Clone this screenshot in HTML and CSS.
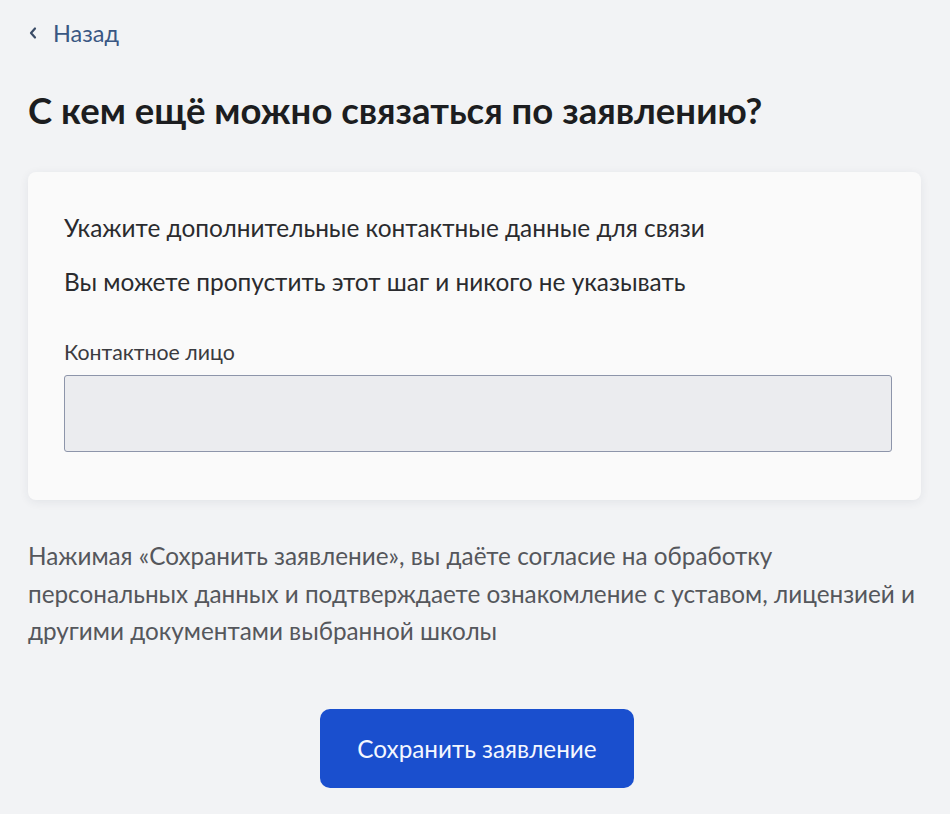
FILE: index.html
```html
<!DOCTYPE html>
<html lang="ru">
<head>
<meta charset="utf-8">
<title>С кем ещё можно связаться</title>
<link rel="stylesheet" href="styles.css">
</head>
<body>
<div class="page">
  <a class="back" href="#"><span class="chev"><svg width="10" height="14" viewBox="0 0 10 14"><path d="M7 2.5 L3 7 L7 11.5" fill="none" stroke="currentColor" stroke-width="2.2" stroke-linecap="round" stroke-linejoin="round"/></svg></span>Назад</a>
  <h1 class="title">С кем ещё можно связаться по заявлению?</h1>
  <div class="card">
    <p class="card-text">Укажите дополнительные контактные данные для связи</p>
    <p class="card-text second">Вы можете пропустить этот шаг и никого не указывать</p>
    <label class="label" for="contact">Контактное лицо</label>
    <input class="input" id="contact" type="text">
  </div>
  <p class="consent">Нажимая «Сохранить заявление», вы даёте согласие на обработку персональных данных и подтверждаете ознакомление с уставом, лицензией и другими документами выбранной школы</p>
  <div class="actions">
    <button class="btn" type="button">Сохранить заявление</button>
  </div>
</div>
</body>
</html>
```
FILE: styles.css
```css
html, body {
  margin: 0;
  padding: 0;
  background: #f2f3f5;
}
body {
  font-family: Lato, "Noto Sans", sans-serif;
  color: #1f1f22;
}
.page {
  padding: 18px 30px 0 28px;
}
.back {
  display: inline-flex;
  align-items: center;
  gap: 15px;
  color: #3a5783;
  text-decoration: none;
  font-size: 23.5px;
  line-height: 30px;
}
.chev {
  display: inline-flex;
  color: #3a4b66;
}
.title {
  margin: 40px 0 0;
  font-size: 36.5px;
  line-height: 44px;
  font-weight: 700;
  color: #1c1d20;
}
.card {
  margin-top: 40px;
  margin-right: -1px;
  background: #fafafa;
  border-radius: 8px;
  box-shadow: 0 2px 10px rgba(40, 50, 80, 0.08);
  padding: 40px 29px 48px 36px;
}
.card-text {
  margin: 0;
  font-size: 24.4px;
  line-height: 32px;
  color: #2a2b2e;
}
.card-text.second {
  margin-top: 22px;
}
.label {
  display: block;
  margin-top: 40px;
  font-size: 21.3px;
  line-height: 28px;
  color: #3a3b3f;
}
.input {
  display: block;
  box-sizing: border-box;
  width: 100%;
  height: 77px;
  margin-top: 9px;
  background: #ebecef;
  border: 1.5px solid #8d95aa;
  border-radius: 3px;
}
.consent {
  margin: 37px -4px 0 0;
  font-size: 24.3px;
  line-height: 37.5px;
  color: #55575c;
}
.actions {
  display: flex;
  justify-content: center;
  margin-top: 59px;
  padding-left: 6px;
}
.btn {
  width: 314px;
  height: 79px;
  border: 0;
  border-radius: 10px;
  background: #1a4fce;
  color: #f4f7ff;
  font-family: Lato, "Noto Sans", sans-serif;
  font-size: 24.3px;
}
```
